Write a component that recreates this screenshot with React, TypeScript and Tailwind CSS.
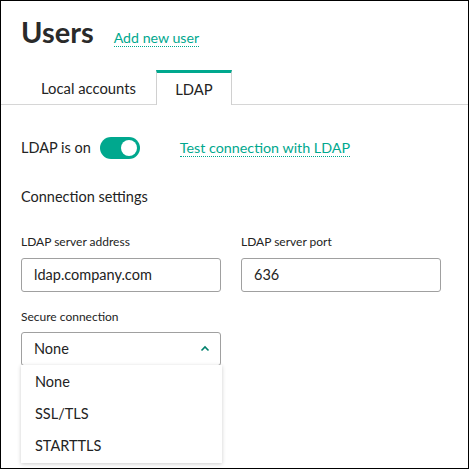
import React from "react";

export default function App() {
  const font = { fontFamily: "Lato, 'Noto Sans', sans-serif" };
  return (
    <div style={font} className="w-[469px] h-[469px] border border-black bg-white relative overflow-hidden text-[#232323]">
      <div className="flex items-baseline px-5 pt-[11px]">
        <h1 className="text-[29px] font-bold leading-[40px] text-[#2a2a2a]">Users</h1>
        <a className="ml-[20px] text-[14.2px] text-[#00a88e] border-b border-dotted border-[#00a88e] leading-[17px]">Add new user</a>
      </div>
      <div className="mt-[18px] flex border-b border-[#d6d6d6] pl-5 h-[35px]">
        <div className="w-[135px] flex items-center justify-center pt-[2px] text-[14.8px]">Local accounts</div>
        <div className="w-[76px] flex items-center justify-center border-t-[3px] border-t-[#00a88e] border-x border-x-[#d0d0d0] bg-white mb-[-1px] text-[14.8px]">LDAP</div>
      </div>
      <div className="px-5">
        <div className="flex items-center mt-[32px] h-[22px]">
          <span className="text-[14.5px]">LDAP is on</span>
          <div className="ml-[9px] w-[40px] h-[22px] rounded-full bg-[#00a88e] relative">
            <div className="absolute right-[3px] top-[3px] w-[16px] h-[16px] rounded-full bg-white"></div>
          </div>
          <a className="ml-[40px] text-[14.3px] text-[#00a88e] border-b border-dotted border-[#00a88e] leading-[17px]">Test connection with LDAP</a>
        </div>
        <div className="mt-[27px] text-[14.5px]">Connection settings</div>
        <div className="mt-[26px] grid grid-cols-[200px_200px] gap-x-[20px]">
          <div>
            <div className="text-[12px] leading-[16px]">LDAP server address</div>
            <div className="mt-[8px] h-[34px] border border-[#a0a0a0] rounded-[3px] flex items-center px-3 text-[14.5px]">ldap.company.com</div>
          </div>
          <div>
            <div className="text-[12px] leading-[16px]">LDAP server port</div>
            <div className="mt-[8px] h-[34px] border border-[#a0a0a0] rounded-[3px] flex items-center px-3 text-[14.5px]">636</div>
          </div>
        </div>
        <div className="mt-[17px] text-[12px] leading-[16px]">Secure connection</div>
        <div className="relative mt-[7px] w-[200px]">
          <div className="h-[34px] border border-[#a0a0a0] rounded-[3px] flex items-center justify-between pl-3 pr-[10px] text-[14.5px]">
            <span>None</span>
            <svg width="10" height="7" viewBox="0 0 10 7">
              <path d="M1.5 5.5 L5 2 L8.5 5.5" stroke="#00806c" strokeWidth="1.6" fill="none" />
            </svg>
          </div>
          <div className="absolute left-0 top-[33px] w-[201px] bg-white shadow-[0_1px_4px_rgba(0,0,0,0.2)] py-[1px]">
            <div className="h-[32px] flex items-center px-[14px] text-[14.5px]">None</div>
            <div className="h-[32px] flex items-center px-[14px] text-[14.5px]">SSL/TLS</div>
            <div className="h-[32px] flex items-center px-[14px] text-[14.5px]">STARTTLS</div>
          </div>
        </div>
      </div>
    </div>
  );
}
